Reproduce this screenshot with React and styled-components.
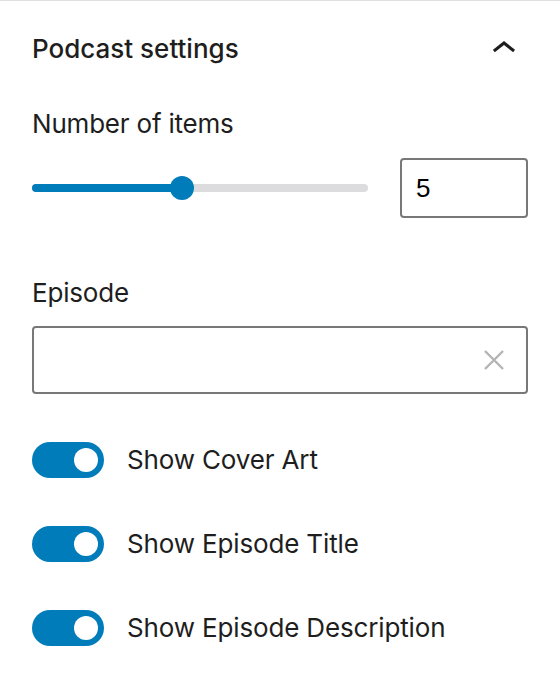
import React from "react";
import styled, { createGlobalStyle } from "styled-components";

const Global = createGlobalStyle`
  html, body { margin: 0; padding: 0; background: #fff; }
  body { font-family: Inter, "Noto Sans", sans-serif; color: #1e1e1e; -webkit-font-smoothing: antialiased; }
  * { box-sizing: border-box; }
`;

const Panel = styled.section`
  width: 560px;
  border-top: 1px solid #e0e0e0;
  background: #fff;
`;

const Header = styled.div`
  height: 96px;
  display: flex;
  align-items: center;
  justify-content: space-between;
  padding: 0 32px 0 32px;
`;

const Title = styled.h2`
  margin: 0;
  font-size: 26px;
  font-weight: 500;
  line-height: 36px;
  letter-spacing: 0;
`;

const IconButton = styled.button`
  border: 0;
  background: transparent;
  padding: 0;
  width: 48px;
  height: 48px;
  display: flex;
  align-items: center;
  justify-content: center;
  color: #1e1e1e;
  cursor: pointer;
`;

const Body = styled.div`
  padding: 9px 32px 32px 32px;
  display: flex;
  flex-direction: column;
`;

const Label = styled.div`
  font-size: 26px;
  line-height: 36px;
  font-weight: 400;
  letter-spacing: -0.2px;
  margin-bottom: ${(p) => p.$mb || 16}px;
`;

const RangeRow = styled.div`
  display: flex;
  align-items: center;
  gap: 32px;
  height: 60px;
  margin-bottom: 57px;
`;

const Rail = styled.div`
  position: relative;
  flex: 1;
  height: 8px;
  border-radius: 4px;
  background: #dcdcde;
`;

const Fill = styled.div`
  height: 100%;
  border-radius: 4px;
  background: #007cba;
`;

const Thumb = styled.div`
  position: absolute;
  top: 50%;
  width: 24px;
  height: 24px;
  margin: -12px 0 0 -11px;
  border-radius: 50%;
  background: #007cba;
`;

const NumberInput = styled.div`
  width: 128px;
  height: 60px;
  border: 2px solid #787878;
  border-radius: 4px;
  display: flex;
  align-items: center;
  padding-left: 14px;
  font-family: "Liberation Sans", Arial, sans-serif;
  font-size: 26px;
  color: #000;
`;

const SearchBox = styled.div`
  height: 68px;
  border: 2px solid #787878;
  border-radius: 4px;
  display: flex;
  align-items: center;
  justify-content: flex-end;
  padding-right: 22px;
  margin-bottom: 48px;
`;

const ToggleList = styled.div`
  display: flex;
  flex-direction: column;
  gap: 48px;
`;

const ToggleRow = styled.label`
  display: flex;
  align-items: center;
  gap: 23px;
  height: 36px;
  font-size: 26px;
  line-height: 36px;
  letter-spacing: -0.15px;
`;

const Track = styled.span`
  width: 72px;
  height: 36px;
  border-radius: 18px;
  background: ${(p) => (p.$on ? "#007cba" : "#fff")};
  display: flex;
  align-items: center;
  justify-content: ${(p) => (p.$on ? "flex-end" : "flex-start")};
  padding: 0 6px;
  flex-shrink: 0;
`;

const Knob = styled.span`
  width: 24px;
  height: 24px;
  border-radius: 50%;
  background: #fff;
`;

const ChevronUp = () => (
  <svg width="48" height="48" viewBox="0 0 24 24" fill="currentColor" aria-hidden="true">
    <path d="M6.5 12.4L12 8l5.5 4.4-.9 1.2L12 10l-4.6 3.6-1-1.2z" />
  </svg>
);

const CloseIcon = () => (
  <svg width="20" height="20" viewBox="0 0 20 20" aria-hidden="true">
    <path d="M1 1L19 19M19 1L1 19" stroke="#b4b4b4" strokeWidth="2.4" fill="none" />
  </svg>
);

const value = 5;
const min = 1;
const max = 10;

export default function App() {
  const pct = ((value - min) / (max - min)) * 100;
  const toggles = ["Show Cover Art", "Show Episode Title", "Show Episode Description"];
  return (
    <>
      <Global />
      <Panel>
        <Header>
          <Title>Podcast settings</Title>
          <IconButton aria-label="Collapse">
            <ChevronUp />
          </IconButton>
        </Header>
        <Body>
          <Label>Number of items</Label>
          <RangeRow>
            <Rail>
              <Fill style={{ width: `${pct}%` }} />
              <Thumb style={{ left: `${pct}%` }} />
            </Rail>
            <NumberInput>{value}</NumberInput>
          </RangeRow>
          <Label $mb={15}>Episode</Label>
          <SearchBox>
            <CloseIcon />
          </SearchBox>
          <ToggleList>
            {toggles.map((t) => (
              <ToggleRow key={t}>
                <Track $on>
                  <Knob />
                </Track>
                {t}
              </ToggleRow>
            ))}
          </ToggleList>
        </Body>
      </Panel>
    </>
  );
}
